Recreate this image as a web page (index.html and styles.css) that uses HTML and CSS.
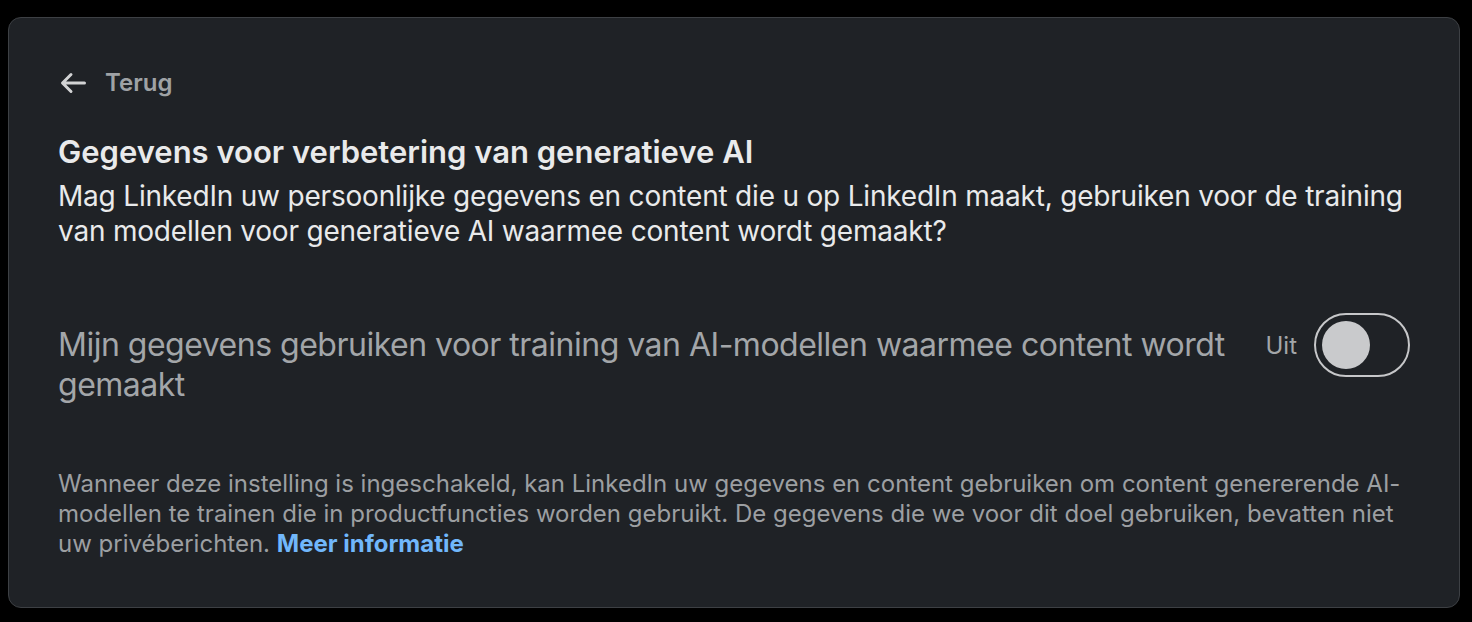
FILE: index.html
```html
<!DOCTYPE html>
<html lang="nl">
<head>
<meta charset="utf-8">
<link rel="stylesheet" href="styles.css">
<title>Gegevens voor verbetering van generatieve AI</title>
</head>
<body>
<main class="card">
  <a class="back" href="#">
    <svg class="back-icon" viewBox="0 0 28 24" width="28" height="24" aria-hidden="true">
      <path d="M25.5 12H4 M12 3.5L3.5 12L12 20.5" fill="none" stroke="currentColor" stroke-width="3" stroke-linecap="round" stroke-linejoin="round"/>
    </svg>
    <span>Terug</span>
  </a>
  <h1 class="title">Gegevens voor verbetering van generatieve AI</h1>
  <p class="lead">Mag LinkedIn uw persoonlijke gegevens en content die u op LinkedIn maakt, gebruiken voor de training van modellen voor generatieve AI waarmee content wordt gemaakt?</p>
  <div class="setting">
    <div class="setting-label">Mijn gegevens gebruiken voor training van AI-modellen waarmee content wordt gemaakt</div>
    <div class="setting-control">
      <span class="state">Uit</span>
      <span class="switch"><span class="knob"></span></span>
    </div>
  </div>
  <p class="note">Wanneer deze instelling is ingeschakeld, kan LinkedIn uw gegevens en content gebruiken om content genererende AI-modellen te trainen die in productfuncties worden gebruikt. De gegevens die we voor dit doel gebruiken, bevatten niet uw privéberichten. <a class="link" href="#">Meer informatie</a></p>
</main>
</body>
</html>
```
FILE: styles.css
```css
* { box-sizing: border-box; }
html, body { background: #000; }
body {
  margin: 0;
  padding: 17px 12px 0 8px;
  font-family: Inter, "Noto Sans", sans-serif;
}
.card {
  background: #1f2226;
  border: 1px solid #3d4044;
  border-radius: 13px;
  padding: 50px 49px 46px 49px;
  height: 591px;
}
.back {
  display: flex;
  align-items: center;
  gap: 18px;
  text-decoration: none;
  color: #9fa2a5;
  font-size: 24px;
  font-weight: 600;
  line-height: 30px;
}
.back-icon { color: #d2d3d4; margin-left: 1px; }
.title {
  margin: 36px 0 0;
  color: #e9eaeb;
  font-size: 31px;
  font-weight: 600;
  line-height: 36px;
}
.lead {
  margin: 9px 0 0;
  color: #e9eaeb;
  font-size: 28px;
  font-weight: 400;
  line-height: 35px;
  letter-spacing: -0.2px;
}
.setting {
  margin-top: 76px;
  display: flex;
  align-items: flex-start;
  gap: 24px;
}
.setting-label {
  flex: 1;
  color: #a3a6a9;
  font-size: 32px;
  line-height: 40px;
  letter-spacing: -0.5px;
}
.setting-control {
  display: flex;
  align-items: center;
  gap: 17px;
  margin-top: -12px;
}
.state {
  color: #a3a6a9;
  font-size: 24px;
}
.switch {
  width: 96px;
  height: 64px;
  border: 2px solid #c6c7c9;
  border-radius: 32px;
  display: flex;
  align-items: center;
  padding-left: 6px;
}
.knob {
  width: 48px;
  height: 48px;
  border-radius: 50%;
  background: #c9cacc;
}
.note {
  margin: 64px 0 0;
  color: #9c9fa2;
  font-size: 24px;
  line-height: 30px;
}
.link {
  color: #71b7fb;
  font-weight: 700;
  text-decoration: none;
}
```
